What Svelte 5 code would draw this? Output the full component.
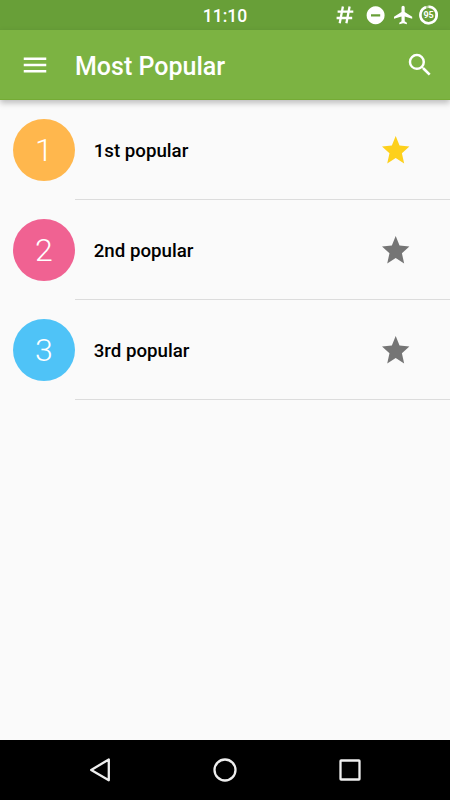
<script>
  let items = [
    { rank: 1, title: '1st popular', color: '#ffb74d', starred: true },
    { rank: 2, title: '2nd popular', color: '#f06292', starred: false },
    { rank: 3, title: '3rd popular', color: '#4fc3f7', starred: false }
  ];
  function toggleStar(item) {
    item.starred = !item.starred;
    items = items;
  }
</script>
<div class="screen">
  <div class="status">
    <span class="time">11:10</span>
    <svg class="status-icons" viewBox="0 0 120 30" fill="#fff">
      <path d="M12.9 6.5L9.7 23.3M19.6 6.5L16.4 23.3M7.6 11.6H23.3M6.6 18H22.2" fill="none" stroke="#fff" stroke-width="2.3" />
      <path fill-rule="evenodd" d="M45.6 6.3a9 9 0 1 0 .01 0zM41 14.2h9.2v2.2H41z" />
      <path d="M82.2 18.7v-1.9l-7.5-4.7V7.3a1.6 1.6 0 0 0-3.2 0v4.8L64 16.8v1.9l7.5-2.3v4.8l-2.2 1.5v1.5l3.8-1 3.8 1v-1.5l-2.2-1.5v-4.8z" />
      <circle cx="98.6" cy="15" r="8.2" fill="none" stroke="#fff" stroke-opacity=".5" stroke-width="2.4" />
      <path d="M98.6 6.8a8.2 8.2 0 1 1-2.7.45" fill="none" stroke="#fff" stroke-width="2.5" />
      <text x="98.6" y="18.4" text-anchor="middle">95</text>
    </svg>
  </div>
  <header>
    <button aria-label="Menu">
      <svg viewBox="0 0 24 24" fill="#fff"><path d="M3 18h18v-2H3v2zm0-5h18v-2H3v2zm0-7v2h18V6H3z" /></svg>
    </button>
    <h1>Most Popular</h1>
    <button aria-label="Search">
      <svg viewBox="0 0 24 24" fill="#fff"><path d="M15.5 14h-.79l-.28-.27A6.47 6.47 0 0 0 16 9.5 6.5 6.5 0 1 0 9.5 16c1.61 0 3.09-.59 4.23-1.57l.27.28v.79l5 4.99L20.49 19l-4.99-5zm-6 0C7.01 14 5 11.99 5 9.5S7.01 5 9.5 5 14 7.01 14 9.5 11.99 14 9.5 14z" /></svg>
    </button>
  </header>
  <main>
    {#each items as item}
      <div class="row">
        <div class="avatar" style="background: {item.color}">{item.rank}</div>
        <div class="body">
          <span class="title">{item.title}</span>
          <button class="star" class:starred={item.starred} aria-label="Favorite" on:click={() => toggleStar(item)}>
            <svg viewBox="2 2 20 19" preserveAspectRatio="none" fill="currentColor"><path d="M12 17.27L18.18 21l-1.64-7.03L22 9.24l-7.19-.61L12 2 9.19 8.63 2 9.24l5.46 4.73L5.82 21z" /></svg>
          </button>
        </div>
      </div>
    {/each}
  </main>
  <nav>
    <svg viewBox="0 0 30 30"><path d="M23.8 4.5v20.8L6.2 14.9z" /></svg>
    <svg viewBox="0 0 30 30"><circle cx="15" cy="15" r="10.5" /></svg>
    <svg viewBox="0 0 30 30"><rect x="5.5" y="5.5" width="19" height="19" rx=".6" /></svg>
  </nav>
</div>
<style>
  :global(body) {
    margin: 0;
  }
  .screen {
    display: flex;
    flex-direction: column;
    height: 100vh;
    background: #fafafa;
    font-family: Roboto, sans-serif;
    overflow: hidden;
  }
  .status {
    display: grid;
    grid-template-columns: 120px 1fr 120px;
    flex: none;
    height: 30px;
    background: #689f38;
    color: #fff;
  }
  .time {
    grid-column: 2;
    text-align: center;
    font-size: 17.5px;
    font-weight: 500;
    line-height: 32px;
  }
  .status-icons {
    width: 120px;
    height: 30px;
  }
  .status-icons text {
    font-size: 9px;
    font-weight: 700;
  }
  header {
    display: flex;
    align-items: center;
    flex: none;
    box-sizing: border-box;
    height: 70px;
    padding: 0 15px 0 20px;
    background: #7cb342;
    border-bottom: 1px solid #75ab35;
    box-shadow: 0 3px 6px rgba(0, 0, 0, 0.25);
  }
  button {
    padding: 0;
    border: 0;
    background: none;
    cursor: pointer;
  }
  button svg {
    display: block;
    width: 30px;
    height: 30px;
  }
  h1 {
    flex: 1;
    margin: 4px 0 0 25px;
    color: #fff;
    font-size: 25px;
    font-weight: 500;
    line-height: 30px;
  }
  main {
    flex: 1;
  }
  .row {
    display: flex;
    height: 100px;
    padding-left: 12.5px;
  }
  .avatar {
    flex: none;
    width: 62.5px;
    height: 62.5px;
    margin-top: 18.75px;
    border-radius: 50%;
    color: #fff;
    font-size: 32px;
    font-weight: 300;
    line-height: 63px;
    text-align: center;
  }
  .body {
    display: flex;
    flex: 1;
    align-items: center;
    box-sizing: border-box;
    padding: 2px 40.5px 0 18.75px;
    border-bottom: 1px solid #dcdcdc;
  }
  .title {
    flex: 1;
    color: #000;
    font-size: 18.7px;
    font-weight: 500;
  }
  .star {
    margin-bottom: 1px;
    color: #757575;
  }
  .star svg {
    width: 27.4px;
    height: 27.4px;
  }
  .starred {
    color: #fdd01c;
  }
  nav {
    display: flex;
    flex: none;
    align-items: center;
    justify-content: space-between;
    height: 60px;
    padding: 0 85px;
    background: #000;
  }
  nav svg {
    width: 30px;
    height: 30px;
    fill: none;
    stroke: #eee;
    stroke-width: 2.3;
    stroke-linejoin: round;
  }
</style>
